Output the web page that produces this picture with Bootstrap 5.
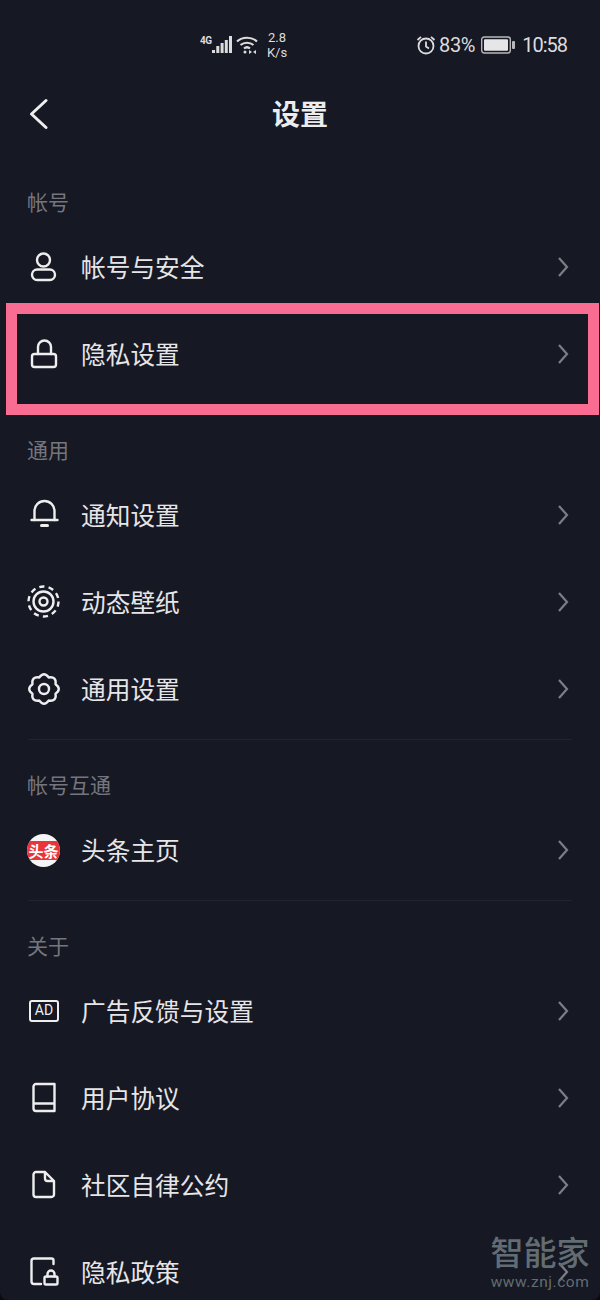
<!DOCTYPE html>
<html lang="zh-CN">
<head>
    <meta charset="UTF-8">
    <meta name="viewport" content="width=device-width, initial-scale=1.0">
    <title>设置</title>

    <link href="https://cdn.jsdelivr.net/npm/bootstrap@5.3.0/dist/css/bootstrap.min.css" rel="stylesheet">

    <style>
        body {
            background: #0b0b0e;
            font-family: "Noto Sans CJK SC", "Noto Sans", sans-serif;
        }
        .screen {
            width: 600px;
            height: 1300px;
            background: #161823;
            color: #e6e6e8;
            border-bottom-left-radius: 8px;
            border-bottom-right-radius: 8px;
            overflow: hidden;
        }
        /* status bar */
        .status-bar {
            height: 90px;
            padding: 0 33px 0 200px;
            color: #dcdcde;
            font-family: Roboto, "Liberation Sans", sans-serif;
            font-size: 20px;
        }
        .net-tag { font-size: 10px; font-weight: 700; margin-bottom: 10px; width: 12px; letter-spacing: -.4px; }
        .net-speed { font-size: 13px; line-height: 15px; text-align: center; width: 22px; margin-left: 8px; }
        .status-time { margin-left: 7px; letter-spacing: -1px; }
        .status-pct { margin-left: 3px; margin-right: 6px; letter-spacing: -.3px; }
        /* title bar */
        .title-bar { height: 48px; padding-left: 28px; }
        .title-text {
            left: 0; right: 0; top: -1px;
            font-size: 28px;
            line-height: 48px;
            font-weight: 700;
            text-align: center;
            color: #ececee;
        }
        /* list */
        .group-title {
            height: 42px;
            line-height: 41px;
            padding-left: 27px;
            font-size: 21px;
            color: #75767d;
        }
        .first-group { margin-top: 43px; }
        .next-group { margin-top: 32px; }
        .after-rule { margin-top: 24px; }
        .set-row {
            height: 87px;
            padding: 0 31px 0 28px;
            font-size: 24.7px;
            color: #e6e6e8;
        }
        .row-icon { width: 32px; height: 32px; margin-right: 21px; flex: none; }
        .row-icon svg { display: block; overflow: visible; }
        .chevron { margin-left: auto; flex: none; }
        .group-rule { height: 1px; margin: 7px 28px 0; background: #22242e; }
        /* highlighted row frame */
        .pink-frame {
            left: 6px; right: 1px; top: -7px; height: 112px;
            border: 11px solid #f96d93;
            pointer-events: none;
        }
        /* small icons */
        .line-ico { fill: none; stroke: #eeeeef; stroke-width: 2.4; stroke-linecap: round; stroke-linejoin: round; }
        .toutiao {
            width: 33px; height: 33px;
            border-radius: 50%;
            background: #f5f5f5;
            overflow: hidden;
            margin: 0 0 0 -1px;
        }
        .toutiao-band {
            width: 100%;
            height: 19px;
            margin-top: 7px;
            border-radius: 4px;
            background: #e8353c;
            color: #fff;
            font-size: 15px;
            line-height: 19px;
            font-weight: 700;
            text-align: center;
            white-space: nowrap;
        }
        .ad-box {
            width: 30px; height: 22px;
            margin: 5px 0 0 1px;
            border: 2.4px solid #eeeeef;
            border-radius: 3px;
            font-family: Roboto, "Liberation Sans", sans-serif;
            font-size: 14px;
            line-height: 17px;
            text-align: center;
            color: #eeeeef;
        }
        /* watermark */
        .znj-mark {
            right: 10px; bottom: 9px;
            width: 100px;
            color: #626d73;
            text-align: center;
        }
        .znj-name {
            font-family: "Liberation Sans", "Noto Sans CJK SC", sans-serif;
            font-size: 33px;
            line-height: 30px;
            height: 30px;
            margin-bottom: 4px;
            font-weight: 500;
        }
        .znj-url { font-family: Roboto, "Liberation Sans", sans-serif; font-size: 15.5px; line-height: 18px; letter-spacing: .55px; white-space: nowrap; }
    </style>
</head>
<body>
    <div class="screen position-relative">
        <!-- status bar -->
        <div class="status-bar d-flex align-items-center justify-content-between">
            <div class="d-flex align-items-center">
                <span class="net-tag">4G</span>
                <svg width="20" height="20" viewBox="0 0 20 20" fill="#dcdcde">
                    <rect x="0" y="15" width="3" height="3"/>
                    <rect x="4.300" y="11" width="3" height="7"/>
                    <rect x="8.600" y="8" width="3" height="10"/>
                    <rect x="12.800" y="5" width="3" height="13"/>
                    <rect x="17" y="1" width="3" height="17"/>
                </svg>
                <svg class="ms-1" width="22" height="20" viewBox="0 0 22 20" fill="none" stroke="#dcdcde" stroke-width="2.200">
                    <path d="M1 6.500C6.500 1.500 15.500 1.500 21 6.500"/>
                    <path d="M4.500 10C8 7 14 7 17.500 10"/>
                    <path d="M8 13.500C9.800 12 12.200 12 14 13.500"/>
                    <circle cx="9" cy="17" r="1.500" fill="#dcdcde" stroke="none"/>
                    <path d="M13 15l3 2-3 2zM20 15l-3 2 3 2z" fill="#dcdcde" stroke="none"/>
                </svg>
                <div class="net-speed">2.8<br>K/s</div>
            </div>
            <div class="d-flex align-items-center">
                <svg width="20" height="20" viewBox="0 0 20 20" fill="none" stroke="#dcdcde" stroke-width="1.800">
                    <circle cx="10" cy="11" r="7.500"/>
                    <path d="M10 6.500V11.500L13 13.500M1.500 5L5 1.800M18.500 5L15 1.800"/>
                </svg>
                <span class="status-pct">83%</span>
                <svg width="34" height="18" viewBox="0 0 34 18">
                    <rect x=".7" y="1" width="28.600" height="16" rx="2.500" fill="none" stroke="#b8b8ba" stroke-width="1.400"/>
                    <rect x="3" y="3.200" width="24" height="11.600" rx="1" fill="#e6e6e8"/>
                    <rect x="31" y="5" width="3" height="8" rx="1" fill="#b8b8ba"/>
                </svg>
                <span class="status-time">10:58</span>
            </div>
        </div>

        <!-- title -->
        <div class="title-bar position-relative d-flex align-items-center">
            <svg width="20" height="32" viewBox="0 0 20 32" fill="none" stroke="#eeeeef" stroke-width="3" stroke-linecap="round" stroke-linejoin="round">
                <path d="M18 2.500L3.500 16L18 29.500"/>
            </svg>
            <div class="title-text position-absolute">设置</div>
        </div>

        <!-- 帐号 -->
        <div class="group-title first-group">帐号</div>
        <div class="set-row d-flex align-items-center">
            <div class="row-icon">
                <svg width="32" height="32" viewBox="0 0 32 32" class="line-ico">
                    <circle cx="15.500" cy="9" r="6.500"/>
                    <rect x="4" y="18.500" width="23" height="10.500" rx="5.200"/>
                </svg>
            </div>
            帐号与安全
            <svg class="chevron" width="12" height="22" viewBox="0 0 12 22" fill="none" stroke="#7d7e85" stroke-width="2.200"><path d="M2 2l8 9-8 9"/></svg>
        </div>
        <div class="set-row d-flex align-items-center position-relative">
            <div class="row-icon">
                <svg width="32" height="32" viewBox="0 0 32 32" class="line-ico">
                    <rect x="4" y="16" width="24" height="13" rx="2.500"/>
                    <path d="M10 16V9a6.500 6.500 0 0 1 13 0V16"/>
                </svg>
            </div>
            隐私设置
            <svg class="chevron" width="12" height="22" viewBox="0 0 12 22" fill="none" stroke="#7d7e85" stroke-width="2.200"><path d="M2 2l8 9-8 9"/></svg>
            <div class="pink-frame position-absolute"></div>
        </div>

        <!-- 通用 -->
        <div class="group-title next-group">通用</div>
        <div class="set-row d-flex align-items-center">
            <div class="row-icon">
                <svg width="32" height="32" viewBox="0 0 32 32" class="line-ico">
                    <path d="M6.500 21V12a10 10 0 0 1 20 0V21"/>
                    <path d="M3.500 21H29.500"/>
                    <path d="M13.500 26.500H19.500" stroke-width="3"/>
                </svg>
            </div>
            通知设置
            <svg class="chevron" width="12" height="22" viewBox="0 0 12 22" fill="none" stroke="#7d7e85" stroke-width="2.200"><path d="M2 2l8 9-8 9"/></svg>
        </div>
        <div class="set-row d-flex align-items-center">
            <div class="row-icon">
                <svg width="32" height="32" viewBox="0 0 32 32" class="line-ico">
                    <circle cx="15.500" cy="15.500" r="15" stroke-dasharray="5.200 4.225" stroke-linecap="butt"/>
                    <circle cx="15.500" cy="15.500" r="10"/>
                    <circle cx="15.500" cy="15.500" r="4"/>
                </svg>
            </div>
            动态壁纸
            <svg class="chevron" width="12" height="22" viewBox="0 0 12 22" fill="none" stroke="#7d7e85" stroke-width="2.200"><path d="M2 2l8 9-8 9"/></svg>
        </div>
        <div class="set-row d-flex align-items-center">
            <div class="row-icon">
                <svg width="32" height="32" viewBox="0 0 32 32" class="line-ico">
                    <path d="M27.550 11.220Q34 16 27.550 20.780Q28.700 28.700 20.780 27.550Q16 34 11.220 27.550Q3.300 28.700 4.450 20.780Q-2 16 4.450 11.220Q3.300 3.300 11.220 4.450Q16 -2 20.780 4.450Q28.700 3.300 27.550 11.220Z"/>
                    <circle cx="16" cy="16" r="5"/>
                </svg>
            </div>
            通用设置
            <svg class="chevron" width="12" height="22" viewBox="0 0 12 22" fill="none" stroke="#7d7e85" stroke-width="2.200"><path d="M2 2l8 9-8 9"/></svg>
        </div>
        <div class="group-rule"></div>

        <!-- 帐号互通 -->
        <div class="group-title after-rule">帐号互通</div>
        <div class="set-row d-flex align-items-center">
            <div class="row-icon">
                <div class="toutiao"><div class="toutiao-band">头条</div></div>
            </div>
            头条主页
            <svg class="chevron" width="12" height="22" viewBox="0 0 12 22" fill="none" stroke="#7d7e85" stroke-width="2.200"><path d="M2 2l8 9-8 9"/></svg>
        </div>
        <div class="group-rule"></div>

        <!-- 关于 -->
        <div class="group-title after-rule">关于</div>
        <div class="set-row d-flex align-items-center">
            <div class="row-icon">
                <div class="ad-box">AD</div>
            </div>
            广告反馈与设置
            <svg class="chevron" width="12" height="22" viewBox="0 0 12 22" fill="none" stroke="#7d7e85" stroke-width="2.200"><path d="M2 2l8 9-8 9"/></svg>
        </div>
        <div class="set-row d-flex align-items-center">
            <div class="row-icon">
                <svg width="32" height="32" viewBox="0 0 32 32" class="line-ico">
                    <path d="M26.500 2H8a2.500 2.500 0 0 0-2.500 2.500V26.500A2.500 2.500 0 0 0 8 29H26.500ZM5.500 21.500H26.500"/>
                </svg>
            </div>
            用户协议
            <svg class="chevron" width="12" height="22" viewBox="0 0 12 22" fill="none" stroke="#7d7e85" stroke-width="2.200"><path d="M2 2l8 9-8 9"/></svg>
        </div>
        <div class="set-row d-flex align-items-center">
            <div class="row-icon">
                <svg width="32" height="32" viewBox="0 0 32 32" class="line-ico">
                    <path d="M17 3H8a2.500 2.500 0 0 0-2.500 2.500V25.500A2.500 2.500 0 0 0 8 28H23.500a2.500 2.500 0 0 0 2.500-2.500V12ZM17 3V9.500a2.500 2.500 0 0 0 2.500 2.500H26"/>
                </svg>
            </div>
            社区自律公约
            <svg class="chevron" width="12" height="22" viewBox="0 0 12 22" fill="none" stroke="#7d7e85" stroke-width="2.200"><path d="M2 2l8 9-8 9"/></svg>
        </div>
        <div class="set-row d-flex align-items-center">
            <div class="row-icon">
                <svg width="32" height="32" viewBox="0 0 32 32" class="line-ico">
                    <path d="M13 28H6a2.500 2.500 0 0 1-2.500-2.500V5A2.500 2.500 0 0 1 6 2.500H23.500A2 2 0 0 1 25.500 4.500V8"/>
                    <rect x="16.500" y="20.500" width="13" height="8" rx="1.500"/>
                    <path d="M19.500 20.500V18a3.500 3.500 0 0 1 7 0V20.500"/>
                </svg>
            </div>
            隐私政策
            <svg class="chevron" width="12" height="22" viewBox="0 0 12 22" fill="none" stroke="#7d7e85" stroke-width="2.200"><path d="M2 2l8 9-8 9"/></svg>
        </div>

        <!-- watermark -->
        <div class="znj-mark position-absolute">
            <div class="znj-name">智能家</div>
            <div class="znj-url">www.znj.com</div>
        </div>
    </div>

    <script src="https://cdn.jsdelivr.net/npm/bootstrap@5.3.0/dist/js/bootstrap.bundle.min.js"></script>
</body>
</html>
